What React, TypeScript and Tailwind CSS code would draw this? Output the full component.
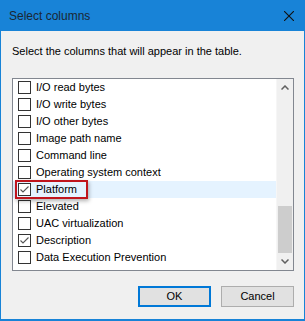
import React from 'react';

const rows = [
  { label: 'I/O read bytes', checked: false },
  { label: 'I/O write bytes', checked: false },
  { label: 'I/O other bytes', checked: false },
  { label: 'Image path name', checked: false },
  { label: 'Command line', checked: false },
  { label: 'Operating system context', checked: false },
  { label: 'Platform', checked: true, hover: true },
  { label: 'Elevated', checked: false },
  { label: 'UAC virtualization', checked: false },
  { label: 'Description', checked: true },
  { label: 'Data Execution Prevention', checked: false },
];

const Check = ({ checked }: { checked: boolean }) => (
  <div className="w-[13px] h-[13px] border border-[#333333] bg-white shrink-0 flex items-center justify-center">
    {checked && (
      <svg width="11" height="11" viewBox="0 0 11 11">
        <path d="M1.5 5.5 L4 8 L9.5 2.5" fill="none" stroke="#555" strokeWidth="1.1" />
      </svg>
    )}
  </div>
);

export default function App() {
  return (
    <div
      className="w-[305px] h-[321px] bg-[#1883d7] flex flex-col text-[11px] text-black"
      style={{ fontFamily: '"Liberation Sans", Arial, sans-serif' }}
    >
      <div className="h-[31px] flex items-center justify-between pl-[9px] pr-[11px] text-[#1b2733]">
        <span className="text-[12px]">Select columns</span>
        <svg width="10" height="10" viewBox="0 0 10 10">
          <path d="M0 0 L10 10 M10 0 L0 10" stroke="#111" strokeWidth="1.1" />
        </svg>
      </div>
      <div className="flex-1 mx-px mb-[2px] bg-[#f0f0f0] flex flex-col pl-[11px] pr-[10px]">
        <div className="h-[47px] flex items-start pt-[12px]">Select the columns that will appear in the table.</div>
        <div className="relative h-[193px] border border-[#828790] bg-white flex">
          <div className="flex-1 flex flex-col">
            {rows.map((r) => (
              <div
                key={r.label}
                className={`h-[17px] flex items-center gap-[5px] pl-[5px] whitespace-nowrap overflow-hidden ${r.hover ? 'bg-[#e5f3ff]' : ''}`}
              >
                <Check checked={r.checked} />
                <span className="leading-none">{r.label}</span>
              </div>
            ))}
          </div>
          <div className="w-[17px] bg-[#f0f0f0] flex flex-col items-center border-l border-[#f6f6f6]">
            <div className="h-[17px] flex items-center justify-center">
              <svg width="8" height="5" viewBox="0 0 8 5">
                <path d="M0.5 4.5 L4 1 L7.5 4.5" fill="none" stroke="#606060" strokeWidth="1.5" />
              </svg>
            </div>
            <div className="flex-1 w-full flex flex-col justify-end pb-0">
              <div className="h-[47px] mx-px bg-[#cdcdcd]" />
            </div>
            <div className="h-[17px] flex items-center justify-center">
              <svg width="8" height="5" viewBox="0 0 8 5">
                <path d="M0.5 0.5 L4 4 L7.5 0.5" fill="none" stroke="#606060" strokeWidth="1.5" />
              </svg>
            </div>
          </div>
          <div className="absolute left-[2px] top-[101px] w-[73px] h-[19px] border-2 border-[#c0151d] shadow-[1px_2px_4px_rgba(0,0,0,0.3)]" />
        </div>
        <div className="flex justify-end gap-[10px] mt-[15px]">
          <button className="w-[73px] h-[21px] border-2 border-[#0078d7] bg-[#e1e1e1] text-black">OK</button>
          <button className="w-[73px] h-[21px] border border-[#adadad] bg-[#e1e1e1] text-black">Cancel</button>
        </div>
      </div>
    </div>
  );
}
